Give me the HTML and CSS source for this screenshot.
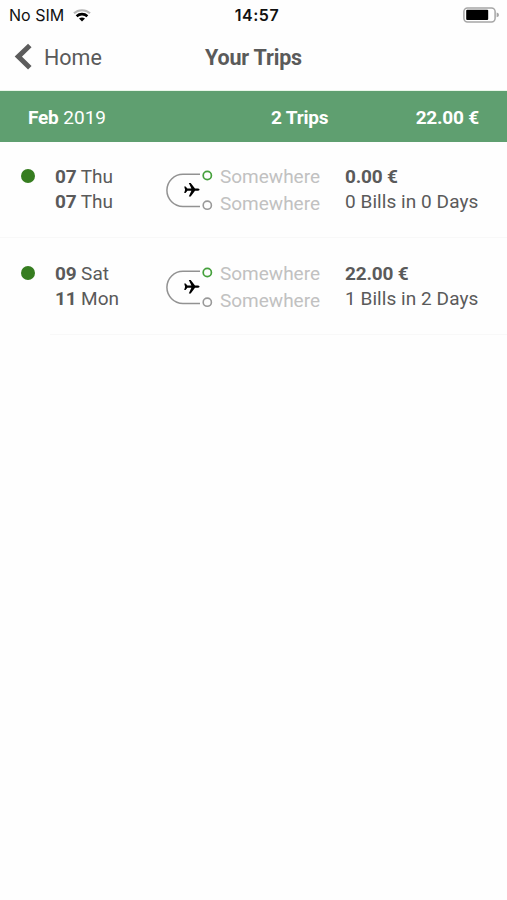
FILE: index.html
```html
<!DOCTYPE html>
<html lang="en">
<head>
<meta charset="utf-8">
<title>Your Trips</title>
<link rel="stylesheet" href="styles.css">
</head>
<body>
<div class="status">
  <div class="carrier"><span>No SIM</span>
    <svg class="wifi" width="18" height="13" viewBox="0 0 18 13" fill="none">
      <path d="M1 4.3C5.4.2 12.6.2 17 4.3" stroke="#b5b5b5" stroke-width="2.2"/>
      <path d="M3.6 7.2C6.7 4.4 11.3 4.4 14.4 7.2" stroke="#000" stroke-width="2.6"/>
      <path d="M6 9.5Q9 7.3 12 9.5L9 12.6Z" fill="#000"/>
    </svg>
  </div>
  <span class="clock">14:57</span>
  <svg class="battery" width="37" height="16" viewBox="0 0 37 16">
    <rect x=".9" y=".9" width="31.2" height="14" rx="3.6" fill="#fff" stroke="#a6a6a6" stroke-width="1.5"/>
    <rect x="3.2" y="2.8" width="22" height="10.2" rx="1" fill="#000"/>
    <path d="M33.6 5.5Q36 6 36 7.9T33.6 10.3Z" fill="#a6a6a6"/>
  </svg>
</div>
<header class="nav">
  <a class="back"><svg width="18" height="28" viewBox="0 0 18 28" fill="none"><path d="M15.8 2.5L4.3 13.6L15.8 24.7" stroke="#5c5c5c" stroke-width="5"/></svg><span>Home</span></a>
  <h1>Your Trips</h1>
</header>
<section class="month">
  <span class="name"><b>Feb</b> 2019</span><b class="count">2 Trips</b><b class="total">22.00 €</b>
</section>
<main>
  <article class="trip">
    <i class="dot"></i>
    <div class="dates"><div><b>07</b> Thu</div><div><b>07</b> Thu</div></div>
    <svg class="route" width="48" height="42" viewBox="0 0 48 42" fill="none">
      <path d="M35 4.2H18A16.1 16.1 0 0 0 18 36.4H35" stroke="#929292" stroke-width="1.5"/>
      <circle cx="42.3" cy="5.5" r="4.1" stroke="#45a03c" stroke-width="1.7"/>
      <circle cx="42.3" cy="35.2" r="4.1" stroke="#999" stroke-width="1.6"/>
      <path transform="translate(.9 -.3)" d="M18.3 16.8H19.7L21.5 18.9H25.5L22.9 13.2H24.8L29.1 18.9H32.2Q33.7 19.3 33.7 20T32.2 21.1H29.1L24.8 26.8H22.9L25.5 21.1H21.5L19.7 23.2H18.3L19.2 20Z" fill="#000"/>
    </svg>
    <div class="places"><div>Somewhere</div><div>Somewhere</div></div>
    <div class="cost"><b>0.00 €</b><div class="bills">0 Bills in 0 Days</div></div>
  </article>
  <article class="trip">
    <i class="dot"></i>
    <div class="dates"><div><b>09</b> Sat</div><div><b>11</b> Mon</div></div>
    <svg class="route" width="48" height="42" viewBox="0 0 48 42" fill="none">
      <path d="M35 4.2H18A16.1 16.1 0 0 0 18 36.4H35" stroke="#929292" stroke-width="1.5"/>
      <circle cx="42.3" cy="5.5" r="4.1" stroke="#45a03c" stroke-width="1.7"/>
      <circle cx="42.3" cy="35.2" r="4.1" stroke="#999" stroke-width="1.6"/>
      <path transform="translate(.9 -.3)" d="M18.3 16.8H19.7L21.5 18.9H25.5L22.9 13.2H24.8L29.1 18.9H32.2Q33.7 19.3 33.7 20T32.2 21.1H29.1L24.8 26.8H22.9L25.5 21.1H21.5L19.7 23.2H18.3L19.2 20Z" fill="#000"/>
    </svg>
    <div class="places"><div>Somewhere</div><div>Somewhere</div></div>
    <div class="cost"><b>22.00 €</b><div class="bills">1 Bills in 2 Days</div></div>
  </article>
</main>
</body>
</html>
```
FILE: styles.css
```css
* { box-sizing: border-box; }
body { margin: 0; background: #fefefe; color: #5a5a5a; font: 19px/25px Roboto, sans-serif; }
b { font-weight: 700; letter-spacing: -.2px; }
svg { display: block; flex: none; }
.status { display: grid; grid-template-columns: 1fr auto 1fr; align-items: center; height: 30px; padding: 0 7px 0 9px; color: #111; font: 16px/20px Inter, sans-serif; }
.carrier { display: flex; align-items: center; gap: 9px; }
.clock { padding-left: 5px; font-weight: 600; letter-spacing: .5px; }
.battery { justify-self: end; }
.nav { display: grid; grid-template-columns: 1fr auto 1fr; align-items: center; height: 61px; padding: 0 14px 6px; border-bottom: 1px solid #e9f6e9; }
.back { display: flex; align-items: center; gap: 12px; font-size: 21.5px; }
.nav h1 { margin: 0; font-size: 21.5px; font-weight: 700; letter-spacing: -.2px; }
.month { display: grid; grid-template-columns: 243px 1fr auto; align-items: center; height: 51px; padding: 2px 28px 0; background: #5f9f70; color: #fff; }
.trip { display: grid; grid-template-columns: 34px 110px 55px 125px 1fr; align-items: start; height: 97px; padding: 21px 0 0 21px; background: linear-gradient(#f8f8f8, #f8f8f8) 0 95px / 100% 1px no-repeat; }
.trip:last-child { background-position: 50px 95px; }
.dot { width: 14px; height: 14px; margin-top: 6px; border-radius: 50%; background: #367d20; }
.dates, .cost { padding-top: 1px; }
.bills { letter-spacing: .06px; }
.route { margin-top: 7px; }
.places { color: #c1c1c1; line-height: 27px; }
```
